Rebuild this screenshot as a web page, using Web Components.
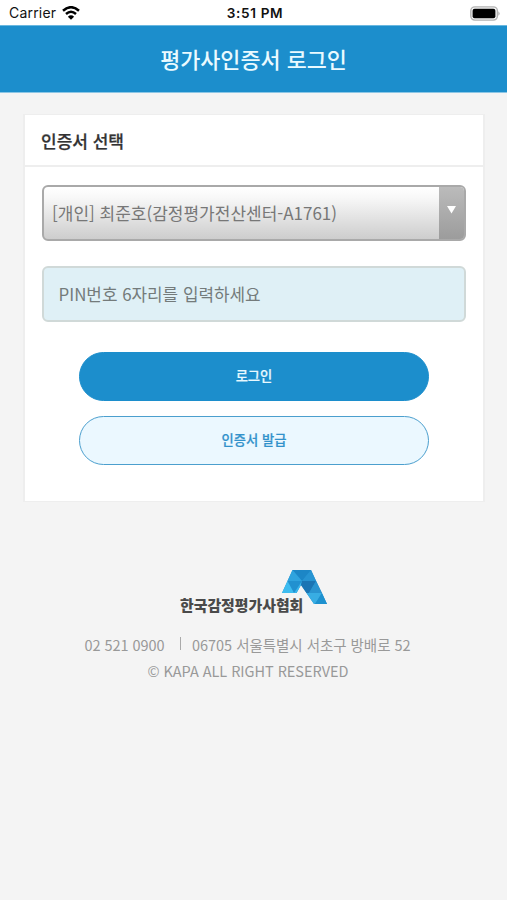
<!DOCTYPE html>
<html lang="ko">
<head>
<meta charset="utf-8">
<title>평가사인증서 로그인</title>
<style>
html,body{margin:0;height:100%}
body{background:#f4f4f4;font-family:"Noto Sans CJK KR","Noto Sans",sans-serif;overflow:hidden}
</style>
</head>
<body>
<login-page></login-page>
<script>
function define(name, html) {
  customElements.define(name, class extends HTMLElement {
    constructor() {
      super();
      this.attachShadow({ mode: 'open' }).innerHTML = html;
    }
  });
}

define('status-bar', `
<style>
:host{display:grid;grid-template-columns:1fr auto 1fr;align-items:center;height:26px;box-sizing:border-box;padding:1px 7px 1px 9px;background:#fff;color:#111;border-bottom:1px solid #6ab8e0;font:400 14px/24px Inter,sans-serif}
.left{display:flex;align-items:center;gap:6px}
.left span{letter-spacing:.2px}
.time{font-weight:600;font-size:13.6px;letter-spacing:.65px;margin-right:-1px}
.right{display:flex;justify-content:flex-end}
svg{display:block}
</style>
<div class="left"><span>Carrier</span>
<svg width="18" height="14" viewBox="0 0 18 14" fill="none" stroke="#000" stroke-width="2.5"><path d="M1 4.7Q9-2.3 17 4.7"/><path d="M4 8Q9 3.6 14 8"/><path d="M9 13.8L5.9 10.7Q9 8 12.1 10.7Z" fill="#000" stroke="none"/></svg></div>
<span class="time">3:51 PM</span>
<div class="right"><svg width="30" height="15" viewBox="0 0 30 15"><rect x=".8" y=".9" width="26.6" height="13.2" rx="4" fill="#f4f4f4" stroke="#b3b3b3" stroke-width="1.4"/><rect x="2.6" y="2.7" width="22.8" height="9.6" rx="2" fill="#000"/><path d="M28.4 5.2Q30.8 7.5 28.4 9.8Z" fill="#aaa"/></svg></div>`);

define('title-bar', `
<style>
:host{display:flex;align-items:center;justify-content:center;height:67px;box-sizing:border-box;padding-bottom:1px;border-bottom:1px solid #8cc6e5;background:#1c8ecc;color:#eafaff;font-size:21.8px;font-weight:500;line-height:32px}
</style><slot></slot>`);

define('login-card', `
<style>
:host{display:block;box-sizing:border-box;width:462px;height:388px;margin:21px 0 0 23px;border:2px solid #eee;border-width:1.5px 2px;background:#fff}
header{height:50px;border-bottom:2px solid #eee;padding-left:16px;color:#333;font-size:17px;font-weight:500;line-height:51px;-webkit-text-stroke:.25px #333}
.body{padding:18px 17px;display:flex;flex-direction:column}
</style>
<header><slot name="title"></slot></header><div class="body"><slot></slot></div>`);

define('cert-select', `
<style>
:host{display:flex;height:56px;box-sizing:border-box;border:2px solid #a9a9a9;border-radius:6px;overflow:hidden;background:linear-gradient(#fff,#f8f8f8 20%,#cdcdcd);color:#777;font-size:17px;line-height:52px}
.value{flex:1;padding-left:8px;white-space:nowrap}
.arrow{width:25px;background:linear-gradient(#bbb,#9c9c9c);display:flex;justify-content:center}
svg{display:block;margin-top:18.5px;margin-right:1px}
</style>
<span class="value"><slot></slot></span><span class="arrow"><svg width="9" height="8"><path d="M0 0H9L4.5 7.5Z" fill="#fff"/></svg></span>`);

define('pin-field', `
<style>
:host{display:block;height:56px;box-sizing:border-box;margin-top:24.5px;border:2px solid #d0d9d8;border-radius:6px;background:#dff0f6;color:#747b7b;font-size:16.9px;line-height:52px;padding-left:14.5px;white-space:nowrap}
</style><slot></slot>`);

define('pill-button', `
<style>
:host{display:block;width:350px;height:49px;box-sizing:border-box;align-self:center;margin-top:15px;border:1.6px solid #4b9fce;border-radius:25px;background:#ebf8ff;color:#3292cb;font-size:13.3px;font-weight:500;line-height:45.5px;text-align:center;-webkit-text-stroke:.2px currentColor}
:host([primary]){margin-top:30px;background:#1c8ecc;border-color:#1c8ecc;color:#e8f9ff}
</style><slot></slot>`);

define('page-footer', `
<style>
:host{display:flex;flex-direction:column;align-items:center;padding-top:67px;color:#999;font-size:14.5px;line-height:26px}
.brand{display:flex;width:147px;height:46px;align-items:flex-end;align-self:flex-start;margin-left:180px}
.name{width:101px;color:#4a4a4a;font-size:14.9px;font-weight:800;line-height:20px;white-space:nowrap;position:relative;z-index:1}
svg{display:block;flex:none;align-self:flex-start}
.row{display:flex;margin:17px 12px 0 0;white-space:nowrap}
.sep{margin:5px 11px 0 15px;width:1.5px;height:13px;background:#aaa}
.copy{margin-right:11px;white-space:nowrap}
.copy,.row{letter-spacing:-.04px}
</style>
<div class="brand"><span class="name">한국감정평가사협회</span>
<svg width="47" height="37" viewBox="0 0 47 37">
<path d="M11.5 1H30L46 35H33L20 16L15.5 24H1Z" fill="#2592cf"/>
<path d="M11.5 1H30L21 12Z" fill="#1c86c6"/>
<path d="M11.5 1L21 12H6.5Z" fill="#2fa3de"/>
<path d="M30 1L35 12H21Z" fill="#2794d2"/>
<path d="M6.5 12H21L15 24H13Z" fill="#2191d0"/>
<path d="M6.5 12L13 24H1Z" fill="#3dbcf0"/>
<path d="M21 12L20 16L15.5 24H13Z" fill="#39b5eb"/>
<path d="M21 12H35L28 24H25.5L20 16Z" fill="#1b75b4"/>
<path d="M35 12L41 24H28Z" fill="#2a94d0"/>
<path d="M25.5 24H41L34 35H33Z" fill="#38ade3"/>
<path d="M41 24L46 35H34Z" fill="#1d91cf"/>
</svg></div>
<div class="row"><span>02 521 0900</span><span class="sep"></span><span>06705 서울특별시 서초구 방배로 52</span></div>
<div class="copy">© KAPA ALL RIGHT RESERVED</div>`);

define('login-page', `
<style>:host{display:block;width:507px;height:900px;background:#f4f4f4}</style>
<status-bar></status-bar>
<title-bar>평가사인증서 로그인</title-bar>
<login-card><span slot="title">인증서 선택</span>
<cert-select>[개인] 최준호(감정평가전산센터-A1761)</cert-select>
<pin-field>PIN번호 6자리를 입력하세요</pin-field>
<pill-button primary>로그인</pill-button>
<pill-button>인증서 발급</pill-button>
</login-card>
<page-footer></page-footer>`);
</script>
</body>
</html>
